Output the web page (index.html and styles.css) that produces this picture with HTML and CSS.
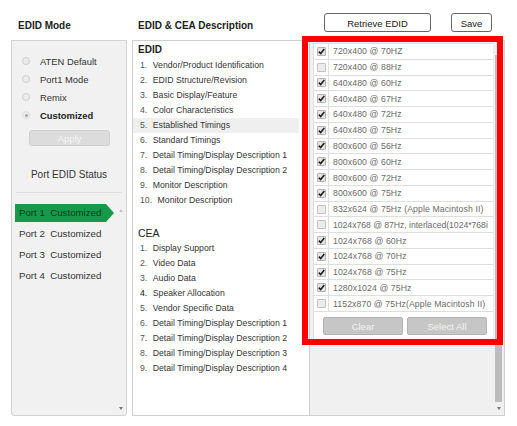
FILE: index.html
```html
<!DOCTYPE html>
<html>
<head>
<meta charset="utf-8">
<link rel="stylesheet" href="styles.css">
</head>
<body>
<div class="top">
  <div class="title t-mode">EDID Mode</div>
  <div class="title t-desc">EDID &amp; CEA Description</div>
  <div class="btn btn-retrieve">Retrieve EDID</div>
  <div class="btn btn-save">Save</div>
</div>
<div class="main">
  <div class="left">
    <div class="radios">
      <div class="radio"><span class="rb"></span>ATEN Default</div>
      <div class="radio"><span class="rb"></span>Port1 Mode</div>
      <div class="radio"><span class="rb"></span>Remix</div>
      <div class="radio sel"><span class="rb on"></span>Customized</div>
    </div>
    <div class="apply">Apply</div>
    <div class="status">Port EDID Status</div>
    <div class="sep"></div>
    <div class="ports">
      <div class="plist">
        <div class="port active">Port 1&nbsp; Customized</div>
        <div class="port">Port 2&nbsp; Customized</div>
        <div class="port">Port 3&nbsp; Customized</div>
        <div class="port">Port 4&nbsp; Customized</div>
      </div>
      <div class="pscroll"><span class="up faint"></span><span class="down"></span></div>
    </div>
  </div>
  <div class="desc">
    <div class="dt">EDID</div>
    <div class="ditem"><span class="n blue">1.</span>Vendor/Product Identification</div>
    <div class="ditem"><span class="n">2.</span>EDID Structure/Revision</div>
    <div class="ditem"><span class="n">3.</span>Basic Display/Feature</div>
    <div class="ditem"><span class="n">4.</span>Color Characteristics</div>
    <div class="ditem hl"><span class="n">5.</span>Established Timings</div>
    <div class="ditem"><span class="n">6.</span>Standard Timings</div>
    <div class="ditem"><span class="n">7.</span>Detail Timing/Display Description 1</div>
    <div class="ditem"><span class="n">8.</span>Detail Timing/Display Description 2</div>
    <div class="ditem"><span class="n">9.</span>Monitor Description</div>
    <div class="ditem"><span class="n">10.</span>Monitor Description</div>
    <div class="dt cea">CEA</div>
    <div class="ditem"><span class="n blue">1.</span>Display Support</div>
    <div class="ditem"><span class="n">2.</span>Video Data</div>
    <div class="ditem"><span class="n">3.</span>Audio Data</div>
    <div class="ditem"><span class="n dark">4.</span>Speaker Allocation</div>
    <div class="ditem"><span class="n">5.</span>Vendor Specific Data</div>
    <div class="ditem"><span class="n">6.</span>Detail Timing/Display Description 1</div>
    <div class="ditem"><span class="n">7.</span>Detail Timing/Display Description 2</div>
    <div class="ditem"><span class="n">8.</span>Detail Timing/Display Description 3</div>
    <div class="ditem"><span class="n">9.</span>Detail Timing/Display Description 4</div>
  </div>
  <div class="timings">
    <div class="tcontent">
      <div class="tbox">
        <div class="trow"><span class="cbc"><span class="cb on"><svg viewBox="0 0 9 9" width="9" height="9"><path d="M1.8 4.6 L3.7 6.6 L7.3 1.9" fill="none" stroke="#222" stroke-width="1.6"/></svg></span></span><span class="tt">720x400 @ 70HZ</span></div>
        <div class="trow"><span class="cbc"><span class="cb"></span></span><span class="tt">720x400 @ 88Hz</span></div>
        <div class="trow"><span class="cbc"><span class="cb on"><svg viewBox="0 0 9 9" width="9" height="9"><path d="M1.8 4.6 L3.7 6.6 L7.3 1.9" fill="none" stroke="#222" stroke-width="1.6"/></svg></span></span><span class="tt">640x480 @ 60Hz</span></div>
        <div class="trow"><span class="cbc"><span class="cb on"><svg viewBox="0 0 9 9" width="9" height="9"><path d="M1.8 4.6 L3.7 6.6 L7.3 1.9" fill="none" stroke="#222" stroke-width="1.6"/></svg></span></span><span class="tt">640x480 @ 67Hz</span></div>
        <div class="trow"><span class="cbc"><span class="cb on"><svg viewBox="0 0 9 9" width="9" height="9"><path d="M1.8 4.6 L3.7 6.6 L7.3 1.9" fill="none" stroke="#222" stroke-width="1.6"/></svg></span></span><span class="tt">640x480 @ 72Hz</span></div>
        <div class="trow"><span class="cbc"><span class="cb on"><svg viewBox="0 0 9 9" width="9" height="9"><path d="M1.8 4.6 L3.7 6.6 L7.3 1.9" fill="none" stroke="#222" stroke-width="1.6"/></svg></span></span><span class="tt">640x480 @ 75Hz</span></div>
        <div class="trow"><span class="cbc"><span class="cb on"><svg viewBox="0 0 9 9" width="9" height="9"><path d="M1.8 4.6 L3.7 6.6 L7.3 1.9" fill="none" stroke="#222" stroke-width="1.6"/></svg></span></span><span class="tt">800x600 @ 56Hz</span></div>
        <div class="trow"><span class="cbc"><span class="cb on"><svg viewBox="0 0 9 9" width="9" height="9"><path d="M1.8 4.6 L3.7 6.6 L7.3 1.9" fill="none" stroke="#222" stroke-width="1.6"/></svg></span></span><span class="tt">800x600 @ 60Hz</span></div>
        <div class="trow"><span class="cbc"><span class="cb on"><svg viewBox="0 0 9 9" width="9" height="9"><path d="M1.8 4.6 L3.7 6.6 L7.3 1.9" fill="none" stroke="#222" stroke-width="1.6"/></svg></span></span><span class="tt">800x600 @ 72Hz</span></div>
        <div class="trow"><span class="cbc"><span class="cb on"><svg viewBox="0 0 9 9" width="9" height="9"><path d="M1.8 4.6 L3.7 6.6 L7.3 1.9" fill="none" stroke="#222" stroke-width="1.6"/></svg></span></span><span class="tt">800x600 @ 75Hz</span></div>
        <div class="trow"><span class="cbc"><span class="cb"></span></span><span class="tt">832x624 @ 75Hz (Apple Macintosh II)</span></div>
        <div class="trow"><span class="cbc"><span class="cb"></span></span><span class="tt tight">1024x768 @ 87Hz, interlaced(1024*768i</span></div>
        <div class="trow"><span class="cbc"><span class="cb on"><svg viewBox="0 0 9 9" width="9" height="9"><path d="M1.8 4.6 L3.7 6.6 L7.3 1.9" fill="none" stroke="#222" stroke-width="1.6"/></svg></span></span><span class="tt">1024x768 @ 60Hz</span></div>
        <div class="trow"><span class="cbc"><span class="cb on"><svg viewBox="0 0 9 9" width="9" height="9"><path d="M1.8 4.6 L3.7 6.6 L7.3 1.9" fill="none" stroke="#222" stroke-width="1.6"/></svg></span></span><span class="tt">1024x768 @ 70Hz</span></div>
        <div class="trow"><span class="cbc"><span class="cb on"><svg viewBox="0 0 9 9" width="9" height="9"><path d="M1.8 4.6 L3.7 6.6 L7.3 1.9" fill="none" stroke="#222" stroke-width="1.6"/></svg></span></span><span class="tt">1024x768 @ 75Hz</span></div>
        <div class="trow"><span class="cbc"><span class="cb on"><svg viewBox="0 0 9 9" width="9" height="9"><path d="M1.8 4.6 L3.7 6.6 L7.3 1.9" fill="none" stroke="#222" stroke-width="1.6"/></svg></span></span><span class="tt">1280x1024 @ 75Hz</span></div>
        <div class="trow"><span class="cbc"><span class="cb"></span></span><span class="tt">1152x870 @ 75Hz(Apple Macintosh II)</span></div>
        <div class="tbtns"><div class="gbtn clear">Clear</div><div class="gbtn">Select All</div></div>
      </div>
    </div>
    <div class="tscroll"><span class="up"></span><span class="thumb"></span><span class="down"></span></div>
  </div>
</div>
<div class="redbox"></div>
</body>
</html>
```

FILE: styles.css
```css
* { box-sizing: border-box; }
html, body { margin: 0; padding: 0; background: #fff; }
body {
  font-family: "Liberation Sans", Arial, sans-serif;
  color: #333;
  position: relative;
  width: 517px;
  height: 426px;
  overflow: hidden;
}
.top { display: flex; height: 40px; padding-top: 13px; }
.title { font-weight: bold; font-size: 10px; color: #222; line-height: 19px; padding-top: 3px; }
.t-mode { margin-left: 18px; width: 120px; }
.t-desc { width: 186px; }
.btn {
  height: 19px; border: 1px solid #666; border-radius: 3px; background: #fff;
  font-size: 9.5px; color: #222; display: flex; align-items: center; justify-content: center;
  padding-top: 1px;
}
.btn-retrieve { width: 107px; }
.btn-save { width: 41px; margin-left: 20px; }

.main { display: flex; height: 376px; padding-left: 11px; }

.left {
  width: 116px; border: 1px solid #d2d2d2; background: #f1f1f1;
  border-radius: 0 0 3px 3px; display: flex; flex-direction: column;
}
.radios { padding-top: 11px; }
.radio { height: 18px; display: flex; align-items: center; padding-left: 10px; font-size: 9.4px; color: #333; }
.radio.sel { font-weight: bold; color: #222; }
.rb {
  width: 8px; height: 8px; border-radius: 50%; border: 1px solid #cdcdcd; background: #ebebeb;
  margin-right: 10px; display: flex; align-items: center; justify-content: center;
}
.rb.on { border-color: #dedede; background: #ececec; }
.rb.on::after { content: ""; width: 3px; height: 3px; border-radius: 50%; background: #a8a8a8; }
.apply {
  margin: 6px 0 0 17px; width: 81px; height: 16px; background: #dcdcdc; border: 1px solid #d0d0d0;
  border-radius: 3px; color: #f7f7f7; font-size: 9.5px; display: flex; align-items: center; justify-content: center;
}
.status { margin-top: 23px; line-height: 12px; text-align: center; font-size: 10px; color: #333; }
.sep { margin: 11px 4px 0; border-top: 1px solid #dcdcdc; }
.ports { margin-top: 11px; flex: 1; display: flex; }
.plist { flex: 1; padding-left: 3px; }
.port { height: 18px; line-height: 18px; padding-left: 4px; font-size: 9.7px; color: #333; margin-top: 3px; white-space: nowrap; }
.port.active {
  margin-top: 0; width: 99px; background: #16994a; color: #0d3a1c;
  clip-path: polygon(0 0, calc(100% - 8px) 0, 100% 50%, calc(100% - 8px) 100%, 0 100%);
}
.pscroll { width: 11px; display: flex; flex-direction: column; align-items: center; justify-content: space-between; padding: 5px 0 5px; }
.up { width: 0; height: 0; border-left: 2.5px solid transparent; border-right: 2.5px solid transparent; border-bottom: 3px solid #999; }
.up.faint { border-bottom-color: #c4c4c4; }
.down { width: 0; height: 0; border-left: 2.5px solid transparent; border-right: 2.5px solid transparent; border-top: 3px solid #777; }

.desc {
  width: 177px; margin-left: 5px; border: 1px solid #cfcfcf; border-right: none; background: #fff;
}
.dt { line-height: 16px; margin-top: 1px; padding-left: 5px; font-size: 10px; font-weight: bold; color: #222; }
.dt.cea { margin-top: 17px; font-weight: normal; font-size: 10.5px; }
.ditem { height: 15px; line-height: 15px; padding-left: 7px; margin-right: 10px; font-size: 8.7px; color: #333; white-space: nowrap; }
.ditem .n { margin-right: 5.5px; color: #555; }
.ditem .n.blue { color: #2f5f80; }
.ditem .n.dark { color: #111; }
.ditem.hl { background: #efefef; }

.timings {
  width: 196px; border: 1px solid #cfcfcf; background: #f0f0f0; display: flex;
}
.tcontent { width: 183px; padding: 2px 0 0 3px; }
.tbox { background: #fff; border: 1px solid #dedede; border-right: none; }
.trow { height: 15.77px; border-bottom: 1px solid #dedede; display: flex; align-items: center; overflow: hidden; }
.cbc { width: 15px; height: 100%; border-right: 1px solid #dedede; display: flex; align-items: center; justify-content: center; flex: none; }
.cb { width: 9px; height: 9px; border: 1px solid #c2c2c2; background: #ececec; border-radius: 1px; position: relative; }
.cb.on { border-color: #b4b4b4; background: #e4e4e4; }
.cb svg { position: absolute; left: -1px; top: -1px; }
.tt { padding-left: 4px; font-size: 8.7px; color: #6a6a6a; white-space: nowrap; letter-spacing: 0.1px; }
.tt.tight { letter-spacing: -0.05px; }
.tbtns { display: flex; gap: 4px; padding: 5px 0 4px 9px; }
.gbtn {
  width: 80px; height: 18px; background: #c6c6c6; border: 1px solid #b4b4b4; border-radius: 2px;
  color: #f4f4f4; font-size: 9.5px; display: flex; align-items: center; justify-content: center;
}
.tscroll { width: 11px; display: flex; flex-direction: column; align-items: center; padding: 5px 0 5px; }
.tscroll .up { border-bottom-color: #aaa; }
.thumb { width: 7px; flex: 1; background: #bdbdbd; margin: 6px 0 5px; }

.redbox {
  position: absolute; left: 302px; top: 36px; width: 201px; height: 309px;
  border: 6px solid #ff0000; pointer-events: none;
}
```
